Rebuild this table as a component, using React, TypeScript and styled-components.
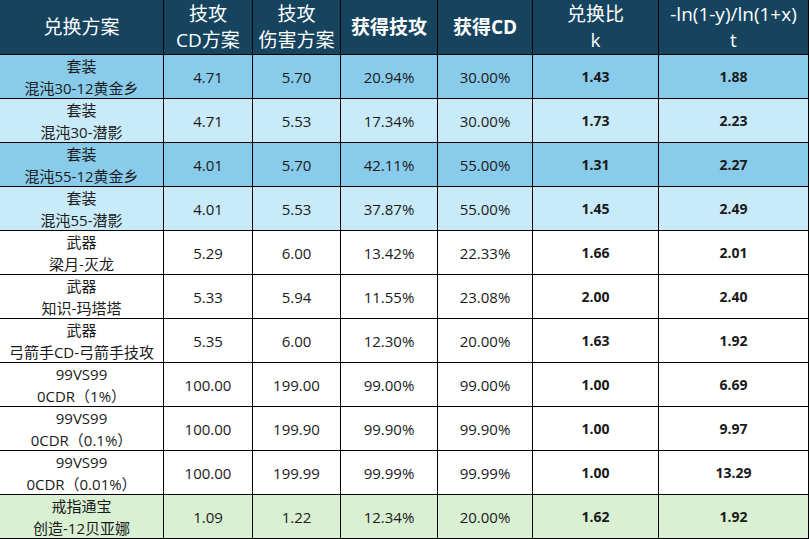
import React from 'react';
import styled, { createGlobalStyle } from 'styled-components';

const GlobalStyle = createGlobalStyle`
	html, body {
		margin: 0;
		padding: 0;
		background: #ffffff;
	}
	body {
		font-family: 'Open Sans', 'Noto Sans CJK SC', sans-serif;
	}
`;

type Tone = 'dark' | 'light' | 'white' | 'green';

const toneColors: Record<Tone, string> = {
	dark: '#88cbea',
	light: '#c9ebf9',
	white: '#ffffff',
	green: '#d9f0d2',
};

const Grid = styled.div`
	display: grid;
	grid-template-columns: 163px 88px 87px 96px 94px 125px 149px;
	grid-template-rows: 54px repeat(11, 43px);
	gap: 1px;
	width: 808px;
	padding: 0 1px 1px 0;
	background: #000000;
`;

const HeadCell = styled.div<{ $bold?: boolean }>`
	display: flex;
	flex-direction: column;
	align-items: center;
	justify-content: center;
	background: #16445f;
	color: #ffffff;
	font-size: 19px;
	line-height: 26px;
	font-weight: ${(p) => (p.$bold ? 700 : 400)};
	text-align: center;
	white-space: nowrap;
`;

const Cell = styled.div<{ $tone: Tone; $bold?: boolean }>`
	display: flex;
	flex-direction: column;
	align-items: center;
	justify-content: center;
	background: ${(p) => toneColors[p.$tone]};
	color: #1a1a1a;
	font-size: ${(p) => (p.$bold ? '14px' : '15px')};
	font-weight: ${(p) => (p.$bold ? 700 : 400)};
	line-height: 22px;
	text-align: center;
	white-space: nowrap;
`;

const NameCell = styled(Cell)`
	font-size: 15px;
	font-weight: 400;
`;

interface Row {
	kind: string;
	name: string;
	cd: string;
	dmg: string;
	atk: string;
	gainCd: string;
	k: string;
	t: string;
	tone: Tone;
}

const rows: Row[] = [
	{ kind: '套装', name: '混沌30-12黄金乡', cd: '4.71', dmg: '5.70', atk: '20.94%', gainCd: '30.00%', k: '1.43', t: '1.88', tone: 'dark' },
	{ kind: '套装', name: '混沌30-潜影', cd: '4.71', dmg: '5.53', atk: '17.34%', gainCd: '30.00%', k: '1.73', t: '2.23', tone: 'light' },
	{ kind: '套装', name: '混沌55-12黄金乡', cd: '4.01', dmg: '5.70', atk: '42.11%', gainCd: '55.00%', k: '1.31', t: '2.27', tone: 'dark' },
	{ kind: '套装', name: '混沌55-潜影', cd: '4.01', dmg: '5.53', atk: '37.87%', gainCd: '55.00%', k: '1.45', t: '2.49', tone: 'light' },
	{ kind: '武器', name: '梁月-灭龙', cd: '5.29', dmg: '6.00', atk: '13.42%', gainCd: '22.33%', k: '1.66', t: '2.01', tone: 'white' },
	{ kind: '武器', name: '知识-玛塔塔', cd: '5.33', dmg: '5.94', atk: '11.55%', gainCd: '23.08%', k: '2.00', t: '2.40', tone: 'white' },
	{ kind: '武器', name: '弓箭手CD-弓箭手技攻', cd: '5.35', dmg: '6.00', atk: '12.30%', gainCd: '20.00%', k: '1.63', t: '1.92', tone: 'white' },
	{ kind: '99VS99', name: '0CDR（1%）', cd: '100.00', dmg: '199.00', atk: '99.00%', gainCd: '99.00%', k: '1.00', t: '6.69', tone: 'white' },
	{ kind: '99VS99', name: '0CDR（0.1%）', cd: '100.00', dmg: '199.90', atk: '99.90%', gainCd: '99.90%', k: '1.00', t: '9.97', tone: 'white' },
	{ kind: '99VS99', name: '0CDR（0.01%）', cd: '100.00', dmg: '199.99', atk: '99.99%', gainCd: '99.99%', k: '1.00', t: '13.29', tone: 'white' },
	{ kind: '戒指通宝', name: '创造-12贝亚娜', cd: '1.09', dmg: '1.22', atk: '12.34%', gainCd: '20.00%', k: '1.62', t: '1.92', tone: 'green' },
];

export default function App() {
	return (
		<>
			<GlobalStyle />
			<Grid>
				<HeadCell>兑换方案</HeadCell>
				<HeadCell>
					<span>技攻</span>
					<span>CD方案</span>
				</HeadCell>
				<HeadCell>
					<span>技攻</span>
					<span>伤害方案</span>
				</HeadCell>
				<HeadCell $bold>获得技攻</HeadCell>
				<HeadCell $bold>获得CD</HeadCell>
				<HeadCell>
					<span>兑换比</span>
					<span>k</span>
				</HeadCell>
				<HeadCell>
					<span>-ln(1-y)/ln(1+x)</span>
					<span>t</span>
				</HeadCell>
				{rows.map((r, i) => (
					<React.Fragment key={i}>
						<NameCell $tone={r.tone}>
							<span>{r.kind}</span>
							<span>{r.name}</span>
						</NameCell>
						<Cell $tone={r.tone}>{r.cd}</Cell>
						<Cell $tone={r.tone}>{r.dmg}</Cell>
						<Cell $tone={r.tone}>{r.atk}</Cell>
						<Cell $tone={r.tone}>{r.gainCd}</Cell>
						<Cell $tone={r.tone} $bold>{r.k}</Cell>
						<Cell $tone={r.tone} $bold>{r.t}</Cell>
					</React.Fragment>
				))}
			</Grid>
		</>
	);
}
